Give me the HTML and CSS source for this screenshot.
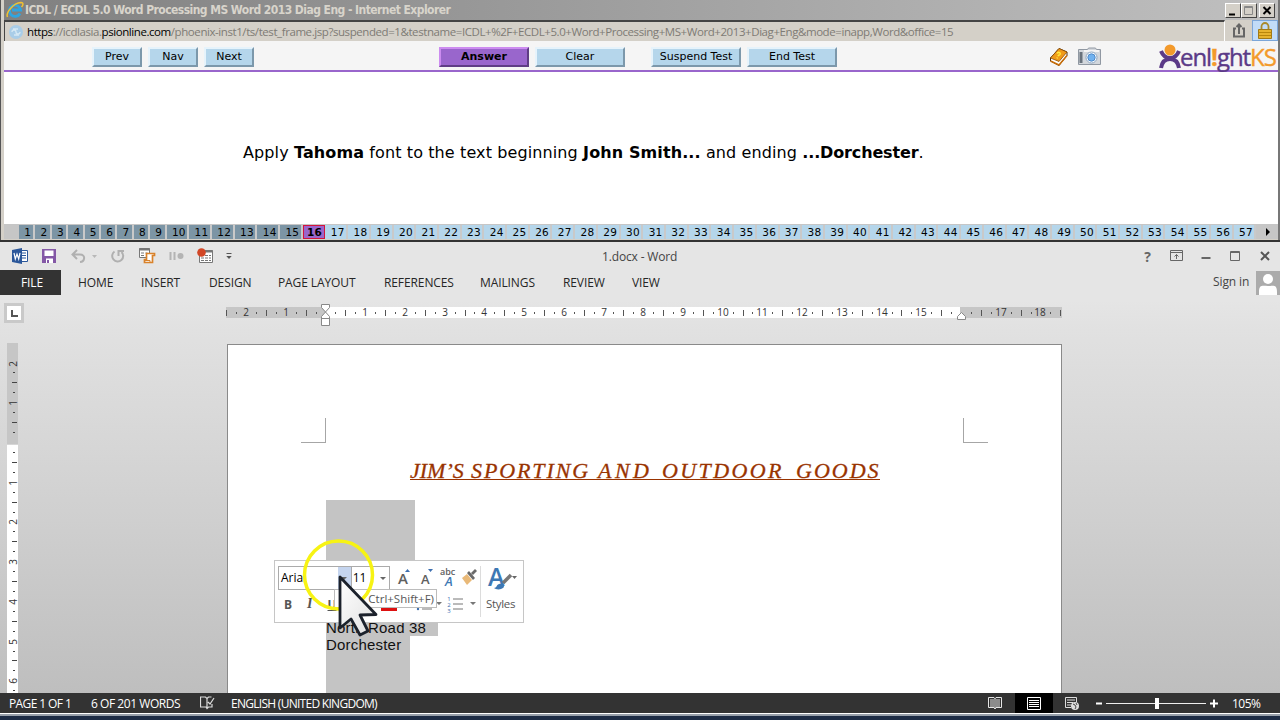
FILE: index.html
```html
<!DOCTYPE html>
<html lang="en">
<head>
    <meta charset="UTF-8">
    <meta name="viewport" content="width=device-width, initial-scale=1.0">
    <title>ICDL / ECDL 5.0 Word Processing</title>
    <link rel="stylesheet" href="styles.css">
</head>
<body>
    <div class="browser">
        <header class="browser-title">
            <svg class="ie-icon" width="18" height="18" viewBox="0 0 18 18">
                <path d="M14 12.5A5.6 5.6 0 1 1 14.6 9H6" fill="none" stroke="#2fa5e0" stroke-width="2.8"/>
                <path d="M1.500 16C-.5 12 7 2 15 1.500c3 0 2 3 .5 4.500" fill="none" stroke="#f2c230" stroke-width="1.500"/>
            </svg>
            <h1>ICDL / ECDL 5.0 Word Processing MS Word 2013 Diag Eng - Internet Explorer</h1>
            <div class="win-buttons">
                <svg width="16" height="15"><path d="M3 10.500h6" stroke="#000" stroke-width="2"/></svg>
                <svg width="16" height="15"><path d="M2.500 2.500h8v8h-8zM2.500 3.500h8" fill="none" stroke="#888"/></svg>
                <svg width="16" height="15"><path d="M3.500 3l7 7M10.500 3l-7 7" stroke="#000" stroke-width="2"/></svg>
            </div>
        </header>
        <div class="address-row">
            <div class="address">
                <svg width="16" height="16" viewBox="0 0 16 16"><circle cx="8" cy="8" r="7" fill="#a9cde8"/><path d="M4 8a2 2 0 0 1 4 0 2 2 0 0 0 4 0M5 5h5M6 11h5" fill="none" stroke="#d5e8f4" stroke-width="1.300"/></svg>
                <span class="url"><b>https</b>://icdlasia.<b>psionline.com</b>/phoenix-inst1/ts/test_frame.jsp?suspended=1&amp;testname=ICDL+%2F+ECDL+5.0+Word+Processing+MS+Word+2013+Diag+Eng&amp;mode=inapp,Word&amp;office=15</span>
            </div>
            <div class="share"><svg width="14" height="16" viewBox="0 0 14 16"><path d="M4 5.500H2v8h10v-8h-2M7 11V2M4.500 4L7 1.500 9.500 4" fill="none" stroke="#666" stroke-width="2"/></svg></div>
            <div class="lock"><svg width="14" height="17" viewBox="0 0 14 17"><path d="M3.500 8V4.500a3.500 3.500 0 0 1 7 0V8" fill="none" stroke="#a98a2b" stroke-width="1.800"/><path d="M.5 7.500h13v9H.5z" fill="#e6b32e" stroke="#a17a18"/><path d="M1 10.500h12M1 13.500h12" stroke="#b8860b"/></svg></div>
        </div>
        <nav class="toolbar">
            <div class="group nav-group">
                <button>Prev</button>
                <button>Nav</button>
                <button>Next</button>
            </div>
            <div class="group answer-group">
                <button class="answer">Answer</button>
                <button>Clear</button>
            </div>
            <div class="group end-group">
                <button>Suspend Test</button>
                <button>End Test</button>
            </div>
            <svg class="book" width="20" height="20" viewBox="0 0 20 20">
                <path d="M1.500 11L10 1.500l8 3.500v3.500L10 18.500 1.500 14z" fill="#fff" stroke="#4a2a08"/>
                <path d="M1.500 11L10 1.500l8 3.500-8 9.500z" fill="#f09a1a" stroke="#8a4c08" stroke-width=".8"/>
                <path d="M1.500 14l8.500 4 8-9.500" fill="none" stroke="#c86d08" stroke-width="1.500"/>
                <path d="M8 6.500c1-2 4-1 3 .8-.5.8-1.700.7-2 1.900M8.500 10.500l-.5.800" fill="none" stroke="#ffec3d" stroke-width="1.500"/>
            </svg>
            <svg class="camera" width="24" height="19" viewBox="0 0 24 19">
                <path d="M.5 2.500h9l1-1.500h7l1 1.500h4v15H.5z" fill="#d3d7dc" stroke="#9098a2"/>
                <path d="M1.500 5h3v11h-3z" fill="#69727c"/><path d="M6 4h15" stroke="#f5f5f5" stroke-width="2"/>
                <circle cx="13.500" cy="10.500" r="5.500" fill="#fff" stroke="#8ba5c0"/>
                <circle cx="13.500" cy="10.500" r="3.700" fill="#71b2ef" stroke="#4f89c8"/>
            </svg>
            <div class="logo">
                <svg width="22" height="26" viewBox="0 0 22 26">
                    <path d="M2 7c2 5 5 7 9 7s7-2 9-7M2 24c1-6 4-9 9-9s8 3 9 9" fill="none" stroke="#5b3a87" stroke-width="4"/>
                    <circle cx="11" cy="6" r="5.500" fill="#f39a2b"/>
                </svg>
                <span class="logo-name">enl<i>!</i>ght<em>KS</em></span>
            </div>
        </nav>
        <main class="question">
            <p>Apply <b>Tahoma</b> font to the text beginning <b>John Smith...</b> and ending <b class="ending">...Dorchester</b>.</p>
        </main>
        <div class="pager">
            <div id="question-list" class="question-list"></div>
            <span class="pager-next"></span>
        </div>
    </div>

    <div class="word">
        <header class="word-title">
            <div class="quick-access">
                <svg width="17" height="16" viewBox="0 0 17 16"><path d="M9 2.500h6.500v11H9" fill="#fff" stroke="#2b579a"/><path d="M10 5h4M10 7.500h4M10 10h4" stroke="#2b579a"/><path d="M0 2l10-2v16L0 14z" fill="#2b579a"/><path d="M2 5l1.300 6L5 6l1.700 5L8 5" fill="none" stroke="#fff" stroke-width="1.200"/></svg>
                <svg width="14" height="14" viewBox="0 0 14 14"><path d="M0 0h14v14H0z" fill="#8458a6"/><path d="M2.500 1.500h9v5.500h-9zM4 9.500h7V14H4z" fill="#fff"/><path d="M5 11h2v3H5z" fill="#8458a6"/></svg>
                <svg width="27" height="15" viewBox="0 0 27 15"><path d="M2 5.500h7c6 0 5 7 0 7.500M6 1L1.500 5.500 6 10" fill="none" stroke="#b0b0b0" stroke-width="2"/><path d="M21 6h5l-2.500 3z" fill="#b8b8b8"/></svg>
                <svg width="14" height="14" viewBox="0 0 14 14"><path d="M3.500 2.500a5.500 5.500 0 1 0 7 .5M7.500 7V2H13" fill="none" stroke="#b0b0b0" stroke-width="2"/></svg>
                <svg width="17" height="16" viewBox="0 0 17 16"><path d="M.5.500h10v9H.500z" fill="#fff" stroke="#777"/><path d="M0 1.500h11" stroke="#777" stroke-width="2"/><path d="M2 5h3M6.500 5h2M2 7.500h3" stroke="#777"/><path d="M7.500 5.500h8v2h-2v7h-8v-3h2z" fill="#fff" stroke="#d9822b" stroke-width="1.700"/><path d="M5 12.500h6v2" fill="none" stroke="#d9822b"/></svg>
                <svg width="15" height="10" viewBox="0 0 15 10"><path d="M1.500 1v8M5.500 1v8" stroke="#b4b4b4" stroke-width="2"/><circle cx="11.500" cy="5" r="3" fill="#b4b4b4"/></svg>
                <svg width="17" height="16" viewBox="0 0 17 16"><path d="M2.500 2.500h13v12h-13z" fill="#fff" stroke="#777"/><path d="M2 3.500h14" stroke="#777" stroke-width="2"/><path d="M4 7.500h3M8 7.500h3M12 7.500h2M4 10h3M8 10h3M12 10h2M4 12.500h3M8 12.500h3M12 12.500h2" stroke="#777"/><circle cx="4.500" cy="4.500" r="4.300" fill="#d24726"/></svg>
                <svg width="6" height="7" viewBox="0 0 6 7"><path d="M.5.500h5" stroke="#555"/><path d="M.3 3h5.400L3 6z" fill="#555"/></svg>
            </div>
            <h2>1.docx - Word</h2>
            <div class="word-buttons">
                <span class="help">?</span>
                <svg width="14" height="12" viewBox="0 0 14 12"><path d="M.5.500h12v10H.500zM.5 2.500h12M6.500 9V4.500M4.500 6.500l2-2 2 2" fill="none" stroke="#666"/></svg>
                <svg width="10" height="12" viewBox="0 0 10 12"><path d="M.5 8h9" stroke="#666" stroke-width="2"/></svg>
                <svg width="11" height="11" viewBox="0 0 11 11"><path d="M.5.500h9v9h-9zM0 1.500h10" fill="none" stroke="#666"/></svg>
                <svg width="10" height="10" viewBox="0 0 10 10"><path d="M1 1l8 8M9 1L1 9" stroke="#555" stroke-width="2"/></svg>
            </div>
        </header>
        <nav class="tabs">
            <span class="tab file">FILE</span>
            <span class="tab">HOME</span>
            <span class="tab">INSERT</span>
            <span class="tab">DESIGN</span>
            <span class="tab">PAGE LAYOUT</span>
            <span class="tab">REFERENCES</span>
            <span class="tab">MAILINGS</span>
            <span class="tab">REVIEW</span>
            <span class="tab">VIEW</span>
            <span class="sign-in">Sign in</span>
            <svg class="avatar" width="24" height="24" viewBox="0 0 24 24"><path d="M0 0h24v24H0z" fill="#ababab"/><circle cx="12" cy="8" r="5" fill="#fff"/><path d="M3 24v-3c0-8 4-6 9-6s9-2 9 6v3z" fill="#fff"/></svg>
        </nav>
        <div class="ruler-row">
            <div class="tab-stop"><svg width="7" height="7"><path d="M1 0v6h6" fill="none" stroke="#555" stroke-width="2"/></svg></div>
            <svg id="ruler-h" class="ruler-h" width="838" height="24" viewBox="226 302 838 24">
                <path d="M226 307h836v11H226z" fill="#c6c6c6"/>
                <path d="M326 307h634v11H326z" fill="#fff"/>
            </svg>
        </div>
        <div class="workspace">
            <svg id="ruler-v" class="ruler-v" width="12" height="350" viewBox="7 343 12 350">
                <path d="M7 343h11v101H7z" fill="#c6c6c6"/>
                <path d="M7 445h11v248H7z" fill="#fff"/>
            </svg>
            <article class="page">
                <div class="corners">
                    <span class="corner"></span>
                    <span class="corner corner-right"></span>
                </div>
                <h3 class="doc-heading"><span class="w1">JIM’S</span><span class="w2">SPORTING</span><span class="w3">AND</span><span class="w4">OUTDOOR</span><span class="w5">GOODS</span></h3>
                <div class="address-lines">
                    <div class="line-blank"></div>
                    <div class="line-road">North Road 38</div>
                    <div class="line-town">Dorchester</div>
                </div>
                <div class="mini-toolbar">
                    <div class="mini-main">
                        <div class="mini-row">
                            <div class="combo combo-font"><span>Arial</span><i></i></div>
                            <div class="combo combo-size"><span>11</span><i></i></div>
                            <svg class="format-icons" width="84" height="23" viewBox="0 0 84 23">
                                <text x="2" y="18" font-size="15">A</text><path d="M9 6l2.500-3L14 6z" fill="#3d6fb0"/>
                                <text x="25" y="18" font-size="13">A</text><path d="M32 3h5l-2.500 3z" fill="#3d6fb0"/>
                                <text x="44" y="9" font-size="9">abc</text><text x="49" y="20" font-size="13" class="blue">A</text>
                                <path d="M66 12l5-4 5 6-5 5z" fill="#e9b978"/><path d="M71 7l6 7 2-2-6-7zM75 7l4-4 2 2-4 4z" fill="#6a6a6a"/>
                            </svg>
                        </div>
                        <div class="mini-row mini-row-second">
                            <b class="bold">B</b><b class="italic">I</b><b class="underline">U</b>
                            <svg class="list-icons" width="140" height="20" viewBox="0 0 140 20">
                                <path d="M41 13h16v4H41z" fill="#d11"/>
                                <circle cx="78" cy="15" r="1.200" fill="#3d6fb0"/><path d="M82 15h10M113 5h10M113 10h10M113 15h10" stroke="#777"/>
                                <path d="M96 8h6l-3 3zM130 8h6l-3 3z" fill="#777"/>
                                <g class="numbers"><text x="109" y="7">1</text><text x="109" y="13">2</text><text x="109" y="19">3</text></g>
                            </svg>
                        </div>
                    </div>
                    <div class="mini-styles">
                        <svg width="34" height="26" viewBox="0 0 34 26"><text x="4" y="20" font-size="25" class="blue">A</text><path d="M15 18c3-1 5 0 5 3-2 3-8 3-10 1 3 0 2-3 5-4z" fill="#3d78b4"/><path d="M19 17l8-8" stroke="#777" stroke-width="3.500"/><path d="M28 10h5l-2.500 3z" fill="#666"/></svg>
                        <span>Styles</span>
                    </div>
                </div>
                <div class="tooltip">Ctrl+Shift+F)</div>
                <svg class="pointer" width="84" height="104" viewBox="300 538 84 104">
                    <defs><linearGradient id="arrow" x1="0" y1="0" x2="1" y2="1"><stop offset="0" stop-color="#fff"/><stop offset="1" stop-color="#e0e0e0"/></linearGradient></defs>
                    <circle cx="338.500" cy="575" r="34" fill="none" stroke="#f7f313" stroke-width="3.500"/>
                    <path d="M340 577v51l11-9 9 16 8-4-8-16 16-.5z" fill="url(#arrow)" stroke="#1c222c" stroke-width="2.800" stroke-linejoin="round"/>
                </svg>
            </article>
        </div>
        <footer class="status">
            <span class="status-page">PAGE 1 OF 1</span>
            <span class="status-words">6 OF 201 WORDS</span>
            <svg class="proof" width="15" height="14" viewBox="0 0 15 14"><path d="M7 12V2.500L5.500 1H.500v10H6l1 1.500L8.500 11H12V8M7 2.500L8.500 1h3M8 6l2 2 4-6" fill="none" stroke="#ddd" stroke-width="1.200"/></svg>
            <span class="status-lang">ENGLISH (UNITED KINGDOM)</span>
            <svg class="read-mode" width="14" height="13" viewBox="0 0 14 13"><path d="M.5.500H6l1 1 1-1h5.500v10H8l-1 1.500-1-1.500H.500zM7 1v11M2 3h4M2 5h4M2 7h4M2 9h4M8 3h4M8 5h4M8 7h4M8 9h4" fill="none" stroke="#e6e6e6"/></svg>
            <div class="print-mode"><svg width="14" height="13" viewBox="0 0 14 13"><path d="M.5.500h13v12H.500zM2 3.500h10M2 5.500h10M2 7.500h10M2 9.500h10" fill="none" stroke="#fff"/></svg></div>
            <svg class="web-mode" width="14" height="13" viewBox="0 0 14 13"><path d="M6 10.500H.500V.500h11V5M2 3h8M2 5.500h6M2 8h4" fill="none" stroke="#ddd"/><circle cx="10" cy="9" r="4" fill="#ddd"/><path d="M8 7l2 1 1 2-1 2M11 6l1 2" fill="none" stroke="#444"/></svg>
            <svg class="zoom" width="122" height="12" viewBox="0 0 122 12"><path d="M0 6.500h6M114 6.500h8M118 2.500v8" stroke="#fff" stroke-width="2"/><path d="M10 6.500h100" stroke="#eee"/><path d="M59 1h4v11h-4z" fill="#fff"/></svg>
            <span class="status-zoom">105%</span>
        </footer>
        <div class="window-edge"></div>
        <div class="desktop"></div>
    </div>
    <script src="script.js"></script>
</body>
</html>
```
FILE: styles.css
```css
body {
    margin: 0;
    width: 1280px;
    height: 720px;
    overflow: hidden;
    background: #1d2c45;
    font-family: "Open Sans", sans-serif;
}

h1, h2, h3, p {
    margin: 0;
    font-weight: normal;
}

svg {
    display: block;
    flex: none;
}

/* browser window */
.browser {
    box-sizing: border-box;
    height: 240px;
    padding-left: 3px;
    border-left: 1px solid #555;
    border-right: 2px solid #777;
    background: #d4d0c8;
    display: flex;
    flex-direction: column;
}

.browser-title {
    height: 20px;
    display: flex;
    align-items: center;
    background: linear-gradient(to right, #808080, #c0c0c0);
}

.ie-icon {
    margin-left: 2px;
}

.browser-title h1 {
    flex: 1;
    margin-left: 1px;
    color: #d8d4cb;
    font: bold 12px "DejaVu Sans Condensed", "DejaVu Sans", sans-serif;
    font-stretch: condensed;
    letter-spacing: -0.55px;
    white-space: nowrap;
}

.win-buttons {
    display: flex;
    margin-right: 3px;
}

.win-buttons svg {
    box-sizing: border-box;
    background: #d4d0c8;
    border: 1px solid;
    border-color: #fff #444 #444 #fff;
}

.win-buttons svg:last-child {
    margin-left: 2px;
}

.address-row {
    height: 21px;
    display: flex;
}

.address {
    box-sizing: border-box;
    width: 1221px;
    padding-left: 3px;
    display: flex;
    align-items: center;
    border-top: 2px solid #444;
    border-left: 1px solid #444;
    border-right: 1px solid #fff;
}

.url {
    margin-left: 3px;
    color: #7e7b75;
    font-size: 11.5px;
    letter-spacing: -0.425px;
    white-space: nowrap;
}

.url b {
    color: #000;
    font-weight: normal;
}

.share, .lock {
    width: 27px;
    display: flex;
    align-items: center;
    justify-content: center;
}

.lock {
    box-sizing: border-box;
    width: 26px;
    background: #c2dcf8;
    border: 1px solid #7ca6d8;
}

.toolbar {
    box-sizing: border-box;
    height: 31px;
    padding-top: 2px;
    display: flex;
    align-items: center;
    background: #f5f5f5;
    border-bottom: 2px solid #9966cc;
}

.group {
    display: flex;
    gap: 6px;
}

.toolbar button {
    box-sizing: border-box;
    width: 90px;
    height: 20px;
    padding: 0;
    background: #b5d6eb;
    border: 2px solid;
    border-color: #e6f3fb #7c98ab #7c98ab #e6f3fb;
    font: 11px "DejaVu Sans", sans-serif;
    white-space: nowrap;
}

.nav-group {
    margin-left: 88px;
}

.toolbar .nav-group button {
    width: 50px;
}

.answer-group {
    margin-left: 185px;
}

.toolbar .answer {
    background: #9966cc;
    border-color: #cc8cf0 #5f3d85 #5f3d85 #cc8cf0;
    font-weight: bold;
}

.end-group {
    margin-left: 26px;
}

.book {
    margin-left: 212px;
}

.camera {
    margin-left: 9px;
}

.logo {
    margin-left: 57px;
    display: flex;
    align-items: center;
}

.logo-name {
    margin-left: -1px;
    color: #5b3a87;
    font-size: 24px;
    line-height: 27px;
    letter-spacing: -1.05px;
    white-space: nowrap;
    -webkit-text-stroke: 0.4px;
}

.logo-name i, .logo-name em {
    color: #f39a2b;
    font-style: normal;
}

.logo-name i {
    font-weight: bold;
}

.question {
    height: 152px;
    background: #fff;
}

.question p {
    padding: 71px 0 0 239px;
    font: 16px/20px "DejaVu Sans", sans-serif;
    letter-spacing: 0.11px;
    white-space: nowrap;
}

.question .ending {
    letter-spacing: -0.15px;
}

.pager {
    height: 15px;
    display: flex;
    align-items: center;
    background: #c6c6c6;
}

.question-list {
    margin-left: 15px;
    display: flex;
}

.number {
    box-sizing: border-box;
    width: 22.71px;
    height: 14px;
    padding-left: 4px;
    border-right: 2px solid #c9c9c9;
    background: #b5d6eb;
    font: 10.5px/14px "DejaVu Sans", sans-serif;
    letter-spacing: 0.3px;
    text-align: center;
}

.number.short {
    width: 16.4px;
    padding-left: 3px;
}

.number.done {
    background: #7c95a5;
}

.number.current {
    background: #9966cc;
    border: 1px solid #d4143c;
    padding-left: 1px;
    font-weight: bold;
    line-height: 12px;
}

.pager-next {
    margin-left: 10px;
    border: 4px solid transparent;
    border-left-color: #000;
    border-right: 0;
}

/* word window */
.word {
    height: 480px;
    display: flex;
    flex-direction: column;
    background: linear-gradient(#e5e5e5 60px, #e1e1e1 90px, #d2d2d2 250px, #bebebe 455px);
}

.word-title {
    box-sizing: border-box;
    height: 30px;
    padding-right: 10px;
    display: grid;
    grid-template-columns: 602px 1fr auto;
    align-items: center;
    border-top: 2px solid #333;
}

.quick-access {
    display: flex;
    align-items: center;
    padding-left: 12px;
}

.quick-access svg:nth-child(2) { margin-left: 13px; }
.quick-access svg:nth-child(3) { margin-left: 15px; }
.quick-access svg:nth-child(4) { margin-left: 13px; }
.quick-access svg:nth-child(5) { margin-left: 14px; }
.quick-access svg:nth-child(6) { margin-left: 13px; }
.quick-access svg:nth-child(7) { margin-left: 13px; }
.quick-access svg:nth-child(8) { margin-left: 12px; }

.word-title h2 {
    color: #444;
    font-size: 12px;
    letter-spacing: -0.15px;
}

.word-buttons {
    display: flex;
    align-items: center;
    gap: 19px;
}

.word-buttons svg:nth-child(3) {
    margin-left: -2px;
}

.help {
    color: #666;
    font-size: 14px;
    font-weight: bold;
}

.tabs {
    height: 25px;
    display: grid;
    grid-template-columns: 61px 63px 68px 69px 106px 96px 83px 69px 598px 43px 24px;
    align-items: center;
}

.tab {
    padding-left: 17px;
    color: #262626;
    font-size: 12px;
    line-height: 25px;
    letter-spacing: -0.1px;
    white-space: nowrap;
}

.tab.file {
    background: #333;
    color: #fff;
    padding-left: 21px;
}

.sign-in {
    color: #444;
    font-size: 12px;
    line-height: 22px;
    margin-top: -2px;
    letter-spacing: -0.1px;
}

.ruler-row {
    height: 48px;
    display: flex;
}

.tab-stop {
    box-sizing: border-box;
    width: 20px;
    height: 20px;
    margin: 8px 0 0 4px;
    border: 3px solid #c9c9c9;
    background: #fff;
    display: flex;
    align-items: center;
    justify-content: center;
}

.ruler-h {
    margin: 7px 0 0 202px;
}

.ruler-h text, .ruler-v text {
    fill: #333;
    font-size: 10px;
    text-anchor: middle;
}

.workspace {
    height: 350px;
    display: flex;
    overflow: hidden;
}

.ruler-v {
    margin-left: 7px;
}

.page {
    position: relative;
    box-sizing: border-box;
    width: 835px;
    height: 360px;
    margin: 1px 0 0 208px;
    background: #fff;
    border: 1px solid #8a8a8a;
}

.corners {
    display: flex;
    justify-content: space-between;
    padding: 73px 73px 0 73px;
}

.corner {
    width: 24px;
    height: 24px;
    border-right: 1px solid #a6a6a6;
    border-bottom: 1px solid #a6a6a6;
}

.corner-right {
    border-right: 0;
    border-left: 1px solid #a6a6a6;
}

.doc-heading {
    display: grid;
    grid-template-columns: 61px 127px 64px 134px 84px;
    width: 470px;
    height: 20px;
    margin: 16px 0 20px 182px;
    border-bottom: 1px solid #993300;
    color: #993300;
    font: italic 22px/24px "Liberation Serif", serif;
    white-space: nowrap;
    -webkit-text-stroke: 0.3px #993300;
}

.w2 { letter-spacing: 1.9px; }
.w3 { letter-spacing: 3.5px; }
.w4 { letter-spacing: 2.4px; }
.w5 { letter-spacing: 2px; }

.address-lines {
    margin-left: 98px;
    color: #111;
    font: 15px/17px "Liberation Sans", sans-serif;
    letter-spacing: 0.2px;
}

.line-blank {
    width: 89px;
    height: 119px;
    background: #c4c4c4;
}

.line-road {
    width: 112px;
    background: #c4c4c4;
}

.line-town {
    width: 84px;
    height: 70px;
    background: #c4c4c4;
}

/* floating toolbar over the selected text */
.mini-toolbar {
    position: absolute;
    left: 46px;
    top: 215px;
    box-sizing: border-box;
    width: 250px;
    height: 63px;
    padding: 5px 3px;
    display: flex;
    background: #fff;
    border: 1px solid #c6c6c6;
}

.mini-main {
    width: 202px;
    border-right: 1px solid #dcdcdc;
}

.mini-row {
    display: flex;
    height: 24px;
}

.combo {
    box-sizing: border-box;
    height: 24px;
    display: flex;
    align-items: center;
    justify-content: space-between;
    border: 1px solid #ababab;
    font-size: 12px;
    line-height: 20px;
}

.combo span {
    margin-top: -1px;
}

.combo-font {
    width: 75px;
    padding-left: 2px;
}

.combo-size {
    width: 39px;
    padding-left: 1px;
    border-left: 0;
}

.combo i {
    width: 13px;
    height: 22px;
    display: flex;
    align-items: center;
    justify-content: center;
}

.combo i::after {
    content: "";
    border: 3px solid transparent;
    border-top-color: #666;
    border-bottom: 0;
}

.combo-font i {
    background: #c5d5ef;
}

.format-icons {
    margin-left: 6px;
}

.format-icons text, .mini-styles text {
    fill: #606060;
    font-weight: 600;
}

.mini-toolbar .blue {
    fill: #3d78b4;
    font-style: italic;
}

.mini-styles svg {
    overflow: visible;
}

.mini-styles .blue {
    font-style: normal;
}

.mini-row-second {
    margin-top: 2px;
    align-items: center;
    color: #555;
    font-size: 12px;
}

.bold { margin-left: 6px; }
.italic { margin-left: 15px; font-family: "Liberation Serif", serif; font-style: italic; font-size: 14px; }
.underline { margin-left: 15px; text-decoration: underline; }

.list-icons {
    margin-left: 3px;
}

.numbers text {
    fill: #3d6fb0;
    font-size: 6px;
    text-anchor: middle;
}

.mini-styles {
    width: 40px;
    display: flex;
    flex-direction: column;
    align-items: center;
    color: #555;
    font-size: 11.5px;
}

.mini-styles span {
    margin-top: 4px;
    letter-spacing: -0.3px;
}

.tooltip {
    position: absolute;
    left: 106px;
    top: 244px;
    box-sizing: border-box;
    width: 103px;
    height: 19px;
    padding-right: 2px;
    background: #fff;
    border: 1px solid #bcbcbc;
    color: #575757;
    font-size: 11.5px;
    line-height: 17px;
    text-align: right;
}

.pointer {
    position: absolute;
    left: 72px;
    top: 193px;
}

.status {
    height: 20px;
    display: flex;
    align-items: center;
    background: #333;
    color: #fff;
    font-size: 12px;
    line-height: 18px;
    white-space: nowrap;
}

.status span {
    padding-top: 2px;
}

.status-page { margin-left: 9px; width: 82px; letter-spacing: -0.6px; }
.status-words { width: 109px; letter-spacing: -0.45px; }
.proof { margin-right: 16px; }
.status-lang { width: 757px; letter-spacing: -0.72px; }

.print-mode {
    margin: 0 12px 0 13px;
    width: 38px;
    height: 20px;
    display: flex;
    align-items: center;
    justify-content: center;
    background: #000;
}

.zoom {
    margin-left: 17px;
}

.status-zoom {
    margin-left: 14px;
    letter-spacing: -0.5px;
}

.window-edge {
    height: 2px;
    border-top: 1px solid #fff;
    background: #98a0aa;
}

.desktop {
    height: 4px;
    background: #1d2c45;
}
```
FILE: script.js
```javascript
// question numbers
const list = document.getElementById('question-list');
for (let i = 1; i <= 57; i++) {
    const cell = document.createElement('span');
    cell.className = 'number';
    if (i < 10) cell.classList.add('short');
    if (i < 16) cell.classList.add('done');
    if (i === 16) cell.classList.add('current');
    cell.textContent = i;
    list.appendChild(cell);
}

// rulers, one unit is a centimetre at 105% zoom
const unit = 39.72;

function addShape(svg, name, attrs, text) {
    const el = document.createElementNS('http://www.w3.org/2000/svg', name);
    for (const key in attrs) el.setAttribute(key, attrs[key]);
    if (text) el.textContent = text;
    svg.appendChild(el);
}

const rulerH = document.getElementById('ruler-h');
for (let q = -10; q <= 74; q++) {
    const x = Math.round(325.5 + q * unit / 4);
    if (q === 0 || q === 64) continue;
    if (q % 4 === 0) {
        addShape(rulerH, 'text', { x: x, y: 316 }, Math.abs(q / 4));
    } else if (q % 2 === 0) {
        addShape(rulerH, 'rect', { x: x, y: 310, width: 1, height: 6, fill: '#555' });
    } else {
        addShape(rulerH, 'rect', { x: x, y: 312, width: 1, height: 2, fill: '#555' });
    }
}
addShape(rulerH, 'path', { d: 'M321.500 304.500h8v3l-4 4.500 4 4.500v9h-8v-9l4-4.500-4-4.500zM321.500 318.500h8', fill: '#fff', stroke: '#888' });
addShape(rulerH, 'path', { d: 'M957.500 319.500v-3l4-4 4 4v3z', fill: '#fff', stroke: '#888' });

const rulerV = document.getElementById('ruler-v');
for (let q = -9; q <= 25; q++) {
    const y = Math.round(442 + q * unit / 4);
    if (q === 0 || q === -9) continue;
    if (q % 4 === 0) {
        addShape(rulerV, 'text', { x: 0, y: 0, transform: 'translate(16.500 ' + (y + 1) + ') rotate(-90)' }, Math.abs(q / 4));
    } else if (q % 2 === 0) {
        addShape(rulerV, 'rect', { x: 12, y: y, width: 5, height: 1, fill: '#444' });
    } else {
        addShape(rulerV, 'rect', { x: 13, y: y, width: 2, height: 1, fill: '#444' });
    }
}
```
